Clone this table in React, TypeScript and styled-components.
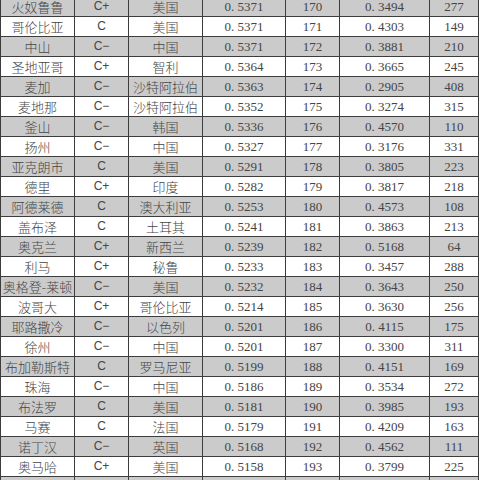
import styled, { createGlobalStyle } from "styled-components";

const GlobalStyle = createGlobalStyle`
  html, body {
    margin: 0;
    padding: 0;
    background: #ffffff;
  }
`;

const Frame = styled.div`
  width: 480px;
  height: 480px;
  overflow: hidden;
  background: #ffffff;
`;

const Table = styled.table`
  border-collapse: collapse;
  table-layout: fixed;
  width: 478px;
  margin-top: -4px;
`;

const Row = styled.tr<{ $shaded: boolean }>`
  height: 20px;
  background: ${(p) => (p.$shaded ? "#cbcbcb" : "#ffffff")};
`;

const Cell = styled.td<{ $kind: "cn" | "grade" | "num" }>`
  border: 1px solid #3c3c3c;
  padding: 0;
  height: 19px;
  text-align: center;
  vertical-align: middle;
  color: #454545;
  white-space: nowrap;
  overflow: hidden;
  line-height: 19px;
  font-family: ${(p) =>
    p.$kind === "cn"
      ? `"Noto Sans CJK SC", sans-serif`
      : p.$kind === "grade"
      ? `"Liberation Sans", Arial, sans-serif`
      : `"Liberation Serif", "Times New Roman", serif`};
  font-size: ${(p) => (p.$kind === "grade" ? "12px" : "13px")};
  font-weight: ${(p) => (p.$kind === "cn" ? 300 : 400)};
`;

type Rec = [string, string, string, string, number, string, number];

const rows: Rec[] = [
  ["火奴鲁鲁", "C+", "美国", "0.5371", 170, "0.3494", 277],
  ["哥伦比亚", "C", "美国", "0.5371", 171, "0.4303", 149],
  ["中山", "C−", "中国", "0.5371", 172, "0.3881", 210],
  ["圣地亚哥", "C+", "智利", "0.5364", 173, "0.3665", 245],
  ["麦加", "C−", "沙特阿拉伯", "0.5363", 174, "0.2905", 408],
  ["麦地那", "C−", "沙特阿拉伯", "0.5352", 175, "0.3274", 315],
  ["釜山", "C−", "韩国", "0.5336", 176, "0.4570", 110],
  ["扬州", "C−", "中国", "0.5327", 177, "0.3176", 331],
  ["亚克朗市", "C", "美国", "0.5291", 178, "0.3805", 223],
  ["德里", "C+", "印度", "0.5282", 179, "0.3817", 218],
  ["阿德莱德", "C", "澳大利亚", "0.5253", 180, "0.4573", 108],
  ["盖布泽", "C", "土耳其", "0.5241", 181, "0.3863", 213],
  ["奥克兰", "C+", "新西兰", "0.5239", 182, "0.5168", 64],
  ["利马", "C+", "秘鲁", "0.5233", 183, "0.3457", 288],
  ["奥格登-莱顿", "C−", "美国", "0.5232", 184, "0.3643", 250],
  ["波哥大", "C+", "哥伦比亚", "0.5214", 185, "0.3630", 256],
  ["耶路撒冷", "C−", "以色列", "0.5201", 186, "0.4115", 175],
  ["徐州", "C−", "中国", "0.5201", 187, "0.3300", 311],
  ["布加勒斯特", "C", "罗马尼亚", "0.5199", 188, "0.4151", 169],
  ["珠海", "C−", "中国", "0.5186", 189, "0.3534", 272],
  ["布法罗", "C", "美国", "0.5181", 190, "0.3985", 193],
  ["马赛", "C", "法国", "0.5179", 191, "0.4209", 163],
  ["诺丁汉", "C−", "英国", "0.5168", 192, "0.4562", 111],
  ["奥马哈", "C+", "美国", "0.5158", 193, "0.3799", 225],
];

const widths = [74, 54, 74, 83, 54, 90, 49];

// the source sheet prints decimals with a gap after the point
const fmt = (s: string) => s.replace(".", ". ");

export default function App() {
  return (
    <Frame>
      <GlobalStyle />
      <Table>
        <colgroup>
          {widths.map((w, i) => (
            <col key={i} style={{ width: w }} />
          ))}
        </colgroup>
        <tbody>
          {rows.map((r, i) => (
            <Row key={r[0]} $shaded={i % 2 === 0}>
              <Cell $kind="cn">{r[0]}</Cell>
              <Cell $kind="grade">{r[1]}</Cell>
              <Cell $kind="cn">{r[2]}</Cell>
              <Cell $kind="num">{fmt(r[3])}</Cell>
              <Cell $kind="num">{r[4]}</Cell>
              <Cell $kind="num">{fmt(r[5])}</Cell>
              <Cell $kind="num">{r[6]}</Cell>
            </Row>
          ))}
          <Row $shaded={true}>
            {widths.map((_, i) => (
              <Cell key={i} $kind="num" />
            ))}
          </Row>
        </tbody>
      </Table>
    </Frame>
  );
}
